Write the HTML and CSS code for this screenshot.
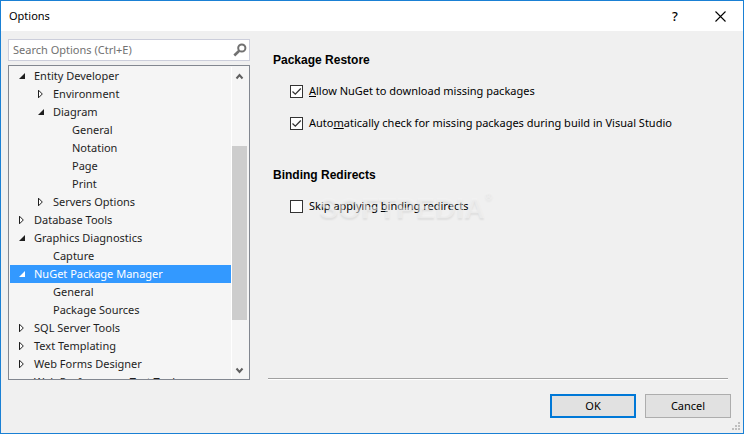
FILE: index.html
```html
<!DOCTYPE html>
<html lang="en">
<head>
<meta charset="utf-8">
<title>Options</title>
<link rel="stylesheet" href="styles.css">
</head>
<body>
<svg width="0" height="0" class="defs" aria-hidden="true">
  <symbol id="open" viewBox="0 0 8 8"><path d="M7 1V7H1Z" fill="currentColor"/></symbol>
  <symbol id="closed" viewBox="0 0 8 10"><path d="M1.5 1.2V8.8L5.3 5Z" fill="#fff" stroke="currentColor"/></symbol>
</svg>
<main class="dialog">
  <header class="titlebar">
    <h1 class="title">Options</h1>
    <button class="caption help" type="button" aria-label="Help">?</button>
    <button class="caption" type="button" aria-label="Close"><svg width="11" height="11" viewBox="0 0 11 11"><path d="M.5 .5L10.5 10.5M10.5 .5L.5 10.5" stroke="#000" stroke-width="1.1"/></svg></button>
  </header>
  <div class="content">
    <aside class="side">
      <div class="search">
        <input class="search-input" type="text" placeholder="Search Options (Ctrl+E)" aria-label="Search Options">
        <svg width="14" height="14" viewBox="0 0 14 14"><circle cx="8.8" cy="5" r="3.6" fill="none" stroke="#717171" stroke-width="2"/><path d="M6.2 7.8L1.3 12.5" stroke="#717171" stroke-width="2.6"/></svg>
      </div>
      <div class="tree-box">
        <ul class="tree">
          <li class="row"><svg class="arrow open"><use href="#open"/></svg>Entity Developer</li>
          <li class="row l2"><svg class="arrow"><use href="#closed"/></svg>Environment</li>
          <li class="row l2"><svg class="arrow open"><use href="#open"/></svg>Diagram</li>
          <li class="row l3 leaf">General</li>
          <li class="row l3 leaf">Notation</li>
          <li class="row l3 leaf">Page</li>
          <li class="row l3 leaf">Print</li>
          <li class="row l2"><svg class="arrow"><use href="#closed"/></svg>Servers Options</li>
          <li class="row"><svg class="arrow"><use href="#closed"/></svg>Database Tools</li>
          <li class="row"><svg class="arrow open"><use href="#open"/></svg>Graphics Diagnostics</li>
          <li class="row l2 leaf">Capture</li>
          <li class="row selected"><svg class="arrow open"><use href="#open"/></svg>NuGet Package Manager</li>
          <li class="row l2 leaf">General</li>
          <li class="row l2 leaf">Package Sources</li>
          <li class="row"><svg class="arrow"><use href="#closed"/></svg>SQL Server Tools</li>
          <li class="row"><svg class="arrow"><use href="#closed"/></svg>Text Templating</li>
          <li class="row"><svg class="arrow"><use href="#closed"/></svg>Web Forms Designer</li>
          <li class="row leaf">Web Performance Test Tools</li>
        </ul>
        <div class="scrollbar">
          <svg class="scroll-arrow" viewBox="0 0 15 18"><path d="M4.5 11.5L7.5 8L10.5 11.5" fill="none" stroke="#606060" stroke-width="2"/></svg>
          <div class="track"><div class="thumb"></div></div>
          <svg class="scroll-arrow" viewBox="0 0 15 18"><path d="M4.5 7.5L7.5 11L10.5 7.5" fill="none" stroke="#606060" stroke-width="2"/></svg>
        </div>
      </div>
    </aside>
    <section class="page">
      <h2 class="heading">Package Restore</h2>
      <label class="check"><input type="checkbox" checked><span><u>A</u>llow NuGet to download missing packages</span></label>
      <label class="check"><input type="checkbox" checked><span>Auto<u>m</u>atically check for missing packages during build in Visual Studio</span></label>
      <h2 class="heading second">Binding Redirects</h2>
      <div class="marked">
        <label class="check"><input type="checkbox"><span>Skip applying <u>b</u>inding redirects</span></label>
        <div class="watermark">SOFTPEDIA<span class="reg">®</span></div>
      </div>
    </section>
  </div>
  <footer class="footer">
    <button class="btn primary" type="button">OK</button>
    <button class="btn" type="button">Cancel</button>
  </footer>
  <svg class="grip" width="8" height="8" viewBox="0 0 8 8"><path d="M6 0h2v2H6zM3 3h2v2H3zM6 3h2v2H6zM0 6h2v2H0zM3 6h2v2H3zM6 6h2v2H6z" fill="#bfbfbf"/></svg>
</main>
</body>
</html>
```
FILE: styles.css
```css
* { box-sizing: border-box; }
body {
  margin: 0;
  font: 11px/18px "Noto Sans", "Open Sans", sans-serif;
  color: #000;
}
.defs { position: absolute; }
.dialog {
  position: relative;
  min-height: 100vh;
  display: flex;
  flex-direction: column;
  border: 1px solid #1a80d4;
  background: #f0f0f0;
}
.titlebar {
  display: flex;
  align-items: center;
  height: 30px;
  padding-left: 8px;
  background: #fff;
}
.title { flex: 1; margin: 0; font-size: 11px; font-weight: 400; }
.caption {
  display: grid;
  place-items: center;
  width: 46px;
  height: 28px;
  padding: 0;
  border: 0;
  background: none;
  font: inherit;
}
.help { width: 44px; font-size: 13px; font-weight: 500; }
.content {
  flex: 1;
  display: flex;
  gap: 18px;
  padding: 8px 15px 0 7px;
}
.side { width: 242px; display: flex; flex-direction: column; gap: 4px; }
.search {
  display: flex;
  align-items: center;
  height: 22px;
  padding: 0 2px 0 4px;
  border: 1px solid #cccedb;
  background: #fff;
}
.search-input {
  flex: 1;
  min-width: 0;
  padding: 0;
  border: 0;
  outline: 0;
  background: none;
  font: inherit;
}
.search-input::placeholder { color: #717171; opacity: 1; }
.tree-box {
  flex: 1 0 0;
  min-height: 0;
  display: flex;
  padding: 1px 1px 0;
  border: 1px solid #828790;
  background: #f5f5f5;
  overflow: hidden;
}
.tree {
  flex: 1;
  height: 0;
  min-height: 100%;
  margin: 0;
  padding: 0;
  list-style: none;
  color: #1e1e1e;
  overflow: hidden;
}
.row { display: flex; align-items: center; gap: 8px; height: 18px; padding-left: 8px; white-space: nowrap; }
.l2 { padding-left: 27px; }
.leaf { padding-left: 24px; }
.l2.leaf { padding-left: 43px; }
.l3.leaf { padding-left: 62px; }
.selected { background: #3399ff; color: #fff; }
.arrow { width: 8px; height: 10px; }
.arrow.open { height: 8px; }
.scrollbar {
  width: 17px;
  display: flex;
  flex-direction: column;
  padding-right: 1px;
  border-left: 1px solid #fff;
}
.scroll-arrow { height: 18px; }
.track { flex: 1; display: grid; grid-template-rows: 61fr 174fr 41fr; }
.thumb { grid-row: 2; background: #cdcdcd; }
.page {
  flex: 1;
  padding: 13px 0 0 5px;
  border-bottom: 1px solid #fff;
  box-shadow: inset 0 -1px #a0a0a0;
}
.heading {
  margin: 0 0 14px;
  font: bold 12px/16px "Liberation Sans", sans-serif;
}
.second { margin-top: 35px; }
.check { display: flex; align-items: center; gap: 6px; height: 18px; margin: 0 0 14px 17px; }
.check input {
  appearance: none;
  width: 13px;
  height: 13px;
  margin: 0;
  border: 1px solid #333;
  background: #fff;
}
.check input:checked {
  background: #fff url("data:image/svg+xml,%3Csvg xmlns='http://www.w3.org/2000/svg' viewBox='0 0 11 11'%3E%3Cpath d='M1.5 5.5L4.3 8.2L9.8 2.5' fill='none' stroke='%23333' stroke-width='1.3'/%3E%3C/svg%3E");
}
.marked { position: relative; }
.watermark {
  position: absolute;
  left: 46px;
  top: -5px;
  font: bold 29px/32px "Liberation Sans", sans-serif;
  color: rgba(245, 245, 245, 0.5);
  text-shadow: 0 2px 2px rgba(0, 0, 0, 0.07);
  pointer-events: none;
  white-space: nowrap;
}
.reg { font-size: 10px; line-height: 10px; vertical-align: top; }
.footer {
  display: flex;
  justify-content: flex-end;
  gap: 9px;
  padding: 14px 12px 15px;
}
.btn {
  width: 86px;
  height: 24px;
  padding: 0;
  border: 1px solid #adadad;
  background: #e1e1e1;
  font: inherit;
}
.primary { border: 2px solid #0078d7; }
.grip { position: absolute; right: 3px; bottom: 3px; }
```
